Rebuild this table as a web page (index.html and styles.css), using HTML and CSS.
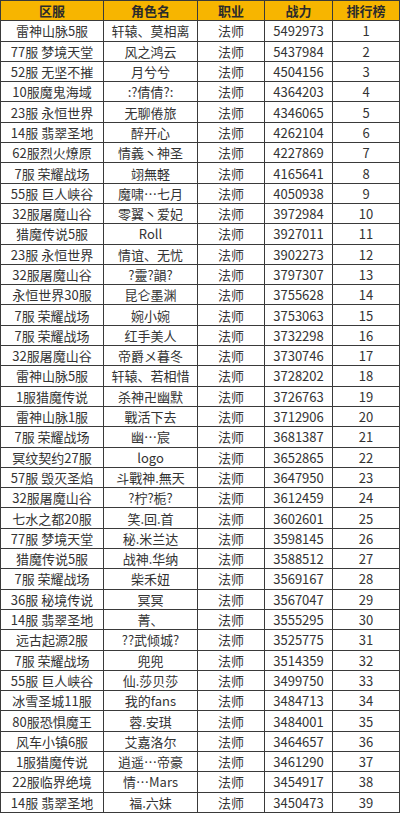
FILE: index.html
```html
<!DOCTYPE html>
<html lang="zh-CN">
<head>
<meta charset="utf-8">
<title>排行榜</title>
<link rel="stylesheet" href="styles.css">
</head>
<body>
<div class="board">
<div class="cell head">区服</div><div class="cell head">角色名</div><div class="cell head">职业</div><div class="cell head">战力</div><div class="cell head">排行榜</div>
<div class="cell">雷神山脉5服</div><div class="cell">轩辕、莫相离</div><div class="cell">法师</div><div class="cell">5492973</div><div class="cell">1</div>
<div class="cell">77服 梦境天堂</div><div class="cell">风之鸿云</div><div class="cell">法师</div><div class="cell">5437984</div><div class="cell">2</div>
<div class="cell">52服 无坚不摧</div><div class="cell">月兮兮</div><div class="cell">法师</div><div class="cell">4504156</div><div class="cell">3</div>
<div class="cell">10服魔鬼海域</div><div class="cell">:?倩倩?:</div><div class="cell">法师</div><div class="cell">4364203</div><div class="cell">4</div>
<div class="cell">23服 永恒世界</div><div class="cell">无聊倦旅</div><div class="cell">法师</div><div class="cell">4346065</div><div class="cell">5</div>
<div class="cell">14服 翡翠圣地</div><div class="cell">醉开心</div><div class="cell">法师</div><div class="cell">4262104</div><div class="cell">6</div>
<div class="cell">62服烈火燎原</div><div class="cell">情義丶神圣</div><div class="cell">法师</div><div class="cell">4227869</div><div class="cell">7</div>
<div class="cell">7服 荣耀战场</div><div class="cell">翊無軽</div><div class="cell">法师</div><div class="cell">4165641</div><div class="cell">8</div>
<div class="cell">55服 巨人峡谷</div><div class="cell">魔啸…七月</div><div class="cell">法师</div><div class="cell">4050938</div><div class="cell">9</div>
<div class="cell">32服屠魔山谷</div><div class="cell">零翼丶爱妃</div><div class="cell">法师</div><div class="cell">3972984</div><div class="cell">10</div>
<div class="cell">猎魔传说5服</div><div class="cell">Roll</div><div class="cell">法师</div><div class="cell">3927011</div><div class="cell">11</div>
<div class="cell">23服 永恒世界</div><div class="cell">情谊、无忧</div><div class="cell">法师</div><div class="cell">3902273</div><div class="cell">12</div>
<div class="cell">32服屠魔山谷</div><div class="cell">?靈?韻?</div><div class="cell">法师</div><div class="cell">3797307</div><div class="cell">13</div>
<div class="cell">永恒世界30服</div><div class="cell">昆仑墨渊</div><div class="cell">法师</div><div class="cell">3755628</div><div class="cell">14</div>
<div class="cell">7服 荣耀战场</div><div class="cell">婉小婉</div><div class="cell">法师</div><div class="cell">3753063</div><div class="cell">15</div>
<div class="cell">7服 荣耀战场</div><div class="cell">红手美人</div><div class="cell">法师</div><div class="cell">3732298</div><div class="cell">16</div>
<div class="cell">32服屠魔山谷</div><div class="cell">帝爵メ暮冬</div><div class="cell">法师</div><div class="cell">3730746</div><div class="cell">17</div>
<div class="cell">雷神山脉5服</div><div class="cell">轩辕、若相惜</div><div class="cell">法师</div><div class="cell">3728202</div><div class="cell">18</div>
<div class="cell">1服猎魔传说</div><div class="cell">杀神卍幽默</div><div class="cell">法师</div><div class="cell">3726763</div><div class="cell">19</div>
<div class="cell">雷神山脉1服</div><div class="cell">戰活下去</div><div class="cell">法师</div><div class="cell">3712906</div><div class="cell">20</div>
<div class="cell">7服 荣耀战场</div><div class="cell">幽…宸</div><div class="cell">法师</div><div class="cell">3681387</div><div class="cell">21</div>
<div class="cell">冥纹契约27服</div><div class="cell">logo</div><div class="cell">法师</div><div class="cell">3652865</div><div class="cell">22</div>
<div class="cell">57服 毁灭圣焰</div><div class="cell">斗戰神.無天</div><div class="cell">法师</div><div class="cell">3647950</div><div class="cell">23</div>
<div class="cell">32服屠魔山谷</div><div class="cell">?柠?栀?</div><div class="cell">法师</div><div class="cell">3612459</div><div class="cell">24</div>
<div class="cell">七水之都20服</div><div class="cell">笑.回.首</div><div class="cell">法师</div><div class="cell">3602601</div><div class="cell">25</div>
<div class="cell">77服 梦境天堂</div><div class="cell">秘.米兰达</div><div class="cell">法师</div><div class="cell">3598145</div><div class="cell">26</div>
<div class="cell">猎魔传说5服</div><div class="cell">战神.华纳</div><div class="cell">法师</div><div class="cell">3588512</div><div class="cell">27</div>
<div class="cell">7服 荣耀战场</div><div class="cell">柴禾妞</div><div class="cell">法师</div><div class="cell">3569167</div><div class="cell">28</div>
<div class="cell">36服 秘境传说</div><div class="cell">冥冥</div><div class="cell">法师</div><div class="cell">3567047</div><div class="cell">29</div>
<div class="cell">14服 翡翠圣地</div><div class="cell">菁、</div><div class="cell">法师</div><div class="cell">3555295</div><div class="cell">30</div>
<div class="cell">远古起源2服</div><div class="cell">??武倾城?</div><div class="cell">法师</div><div class="cell">3525775</div><div class="cell">31</div>
<div class="cell">7服 荣耀战场</div><div class="cell">兜兜</div><div class="cell">法师</div><div class="cell">3514359</div><div class="cell">32</div>
<div class="cell">55服 巨人峡谷</div><div class="cell">仙.莎贝莎</div><div class="cell">法师</div><div class="cell">3499750</div><div class="cell">33</div>
<div class="cell">冰雪圣城11服</div><div class="cell">我的fans</div><div class="cell">法师</div><div class="cell">3484713</div><div class="cell">34</div>
<div class="cell">80服恐惧魔王</div><div class="cell">蓉.安琪</div><div class="cell">法师</div><div class="cell">3484001</div><div class="cell">35</div>
<div class="cell">风车小镇6服</div><div class="cell">艾嘉洛尔</div><div class="cell">法师</div><div class="cell">3464657</div><div class="cell">36</div>
<div class="cell">1服猎魔传说</div><div class="cell">逍遥…帝豪</div><div class="cell">法师</div><div class="cell">3461290</div><div class="cell">37</div>
<div class="cell">22服临界绝境</div><div class="cell">情…Mars</div><div class="cell">法师</div><div class="cell">3454917</div><div class="cell">38</div>
<div class="cell">14服 翡翠圣地</div><div class="cell">福.六妹</div><div class="cell">法师</div><div class="cell">3450473</div><div class="cell">39</div>
</div>
</body>
</html>
```
FILE: styles.css
```css
html, body {
  margin: 0;
  padding: 0;
  background: #ffffff;
}
.board {
  display: grid;
  grid-template-columns: 102px 93px 66px 67px 66px;
  grid-auto-rows: 19.3px;
  gap: 1px;
  padding: 1px;
  width: 400px;
  box-sizing: border-box;
  background: #3a3a3a;
  font-family: "Noto Sans CJK SC", "Noto Sans", sans-serif;
  font-size: 13px;
  color: #333333;
}
.cell {
  background: #ffffff;
  display: flex;
  align-items: center;
  justify-content: center;
  white-space: nowrap;
  overflow: hidden;
  line-height: 1;
}
.head {
  background: #f7b500;
  font-weight: bold;
  color: #2b2b2b;
}
```
